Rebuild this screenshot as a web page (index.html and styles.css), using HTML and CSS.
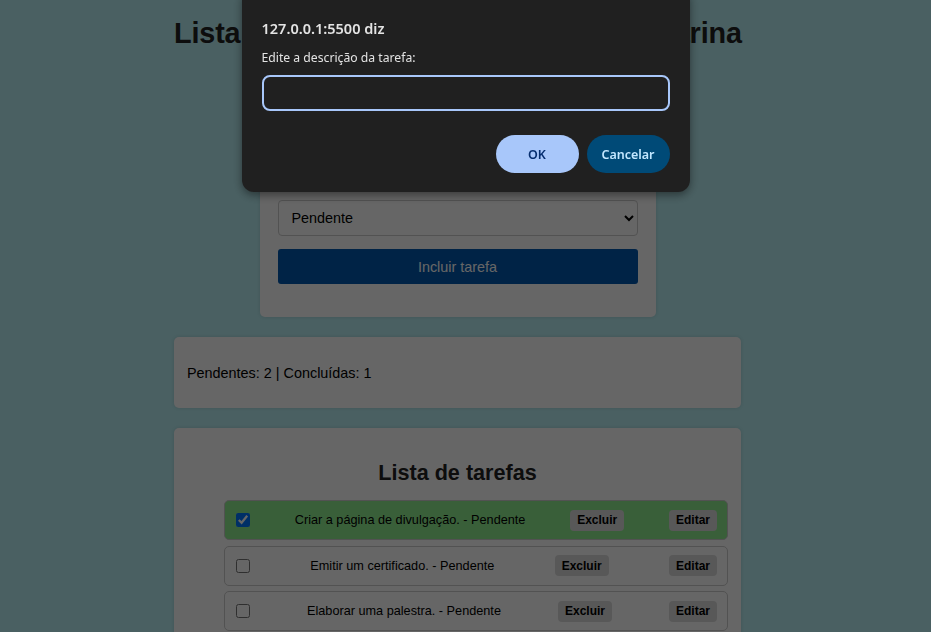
FILE: index.html
```html
<!DOCTYPE html>
<html lang="pt-BR">
<head>
<meta charset="utf-8">
<title>Lista de Tarefas</title>
<link rel="stylesheet" href="styles.css">
</head>
<body>
<div class="page">
  <h1 class="title">Lista de Tarefas do Evento Santa Catarina</h1>

  <section class="card form-card">
    <h2 class="form-title">Nova tarefa</h2>
    <input class="field" type="text" placeholder="Descrição da tarefa">
    <select class="field select">
      <option>Pendente</option>
      <option>Concluída</option>
    </select>
    <button class="add-btn" type="button">Incluir tarefa</button>
  </section>

  <section class="card stats-card">
    <p class="stats">Pendentes: 2 | Concluídas: 1</p>
  </section>

  <section class="card list-card">
    <h2 class="list-title">Lista de tarefas</h2>
    <ul class="tasks">
      <li class="task done">
        <input class="check" type="checkbox" checked>
        <span class="task-text">Criar a página de divulgação. - Pendente</span>
        <button class="task-btn" type="button">Excluir</button>
        <button class="task-btn" type="button">Editar</button>
      </li>
      <li class="task">
        <input class="check" type="checkbox">
        <span class="task-text">Emitir um certificado. - Pendente</span>
        <button class="task-btn" type="button">Excluir</button>
        <button class="task-btn" type="button">Editar</button>
      </li>
      <li class="task">
        <input class="check" type="checkbox">
        <span class="task-text">Elaborar uma palestra. - Pendente</span>
        <button class="task-btn" type="button">Excluir</button>
        <button class="task-btn" type="button">Editar</button>
      </li>
    </ul>
  </section>
</div>

<div class="scrim">
  <div class="dialog" role="dialog">
    <p class="dialog-title">127.0.0.1:5500 diz</p>
    <p class="dialog-label">Edite a descrição da tarefa:</p>
    <input class="dialog-input" type="text">
    <div class="dialog-actions">
      <button class="dlg-btn ok" type="button">OK</button>
      <button class="dlg-btn cancel" type="button">Cancelar</button>
    </div>
  </div>
</div>
</body>
</html>
```

FILE: styles.css
```css
* { box-sizing: border-box; }

html, body { margin: 0; }

body {
  min-height: 100vh;
  padding: 0 16px 0 0;
  background: #b9f0f5;
  font-family: "Liberation Sans", Arial, sans-serif;
  color: #000;
  overflow: hidden;
}

.page {
  width: 567px;
  margin: 0 auto;
  padding-top: 17px;
}

.title {
  margin: 0;
  font-size: 28.8px;
  line-height: 33px;
  font-weight: bold;
  text-align: center;
  letter-spacing: -0.15px;
  color: #222;
  white-space: nowrap;
}

.card {
  background: #fff;
  border-radius: 5px;
  box-shadow: 0 0 4px rgba(0, 0, 0, 0.12);
}

.form-card {
  width: 396px;
  margin: 48px auto 0;
  padding: 18px 18px 33px;
  display: flex;
  flex-direction: column;
  gap: 13px;
}

.form-title {
  margin: 0;
  font-size: 18px;
  line-height: 22px;
  text-align: center;
}

.field {
  height: 36px;
  width: 100%;
  border: 1px solid #ccc;
  border-radius: 4px;
  padding: 0 9px;
  font-family: "Liberation Sans", Arial, sans-serif;
  font-size: 14.4px;
  background: #fff;
  color: #000;
}

.add-btn {
  height: 35px;
  width: 100%;
  border: none;
  border-radius: 3px;
  background: #0058af;
  color: #fff;
  font-family: "Liberation Sans", Arial, sans-serif;
  font-size: 14.4px;
}

.stats-card {
  margin-top: 20px;
  height: 71px;
  padding: 0 13px;
  display: flex;
  align-items: center;
}

.stats {
  margin: 0;
  font-size: 14.4px;
  line-height: 17px;
  padding-top: 1px;
}

.list-card {
  margin-top: 20px;
  padding: 13px 13px 20px;
}

.list-title {
  margin: 19px 0 15px;
  font-size: 21.6px;
  line-height: 25px;
  text-align: center;
  color: #222;
}

.tasks {
  list-style: none;
  margin: 0;
  padding: 0 0 0 37px;
}

.task {
  height: 40px;
  margin-bottom: 5.5px;
  padding: 0 10px 0 11px;
  border: 1px solid #ccc;
  border-radius: 5px;
  display: flex;
  align-items: center;
  justify-content: space-between;
  background: #fff;
  font-size: 12.7px;
}

.task.done { background: #90ee90; }

.check {
  width: 14px;
  height: 14px;
  margin: 0;
}

.task-btn {
  height: 21px;
  padding: 0 7px;
  border: none;
  border-radius: 4px;
  background: #dcdcdc;
  color: #000;
  font-family: "Liberation Sans", Arial, sans-serif;
  font-size: 12px;
  font-weight: bold;
}

/* browser prompt */
.scrim {
  position: fixed;
  inset: 0;
  background: rgba(0, 0, 0, 0.6);
  display: flex;
  justify-content: center;
  align-items: flex-start;
}

.dialog {
  width: 448px;
  margin-top: -12px;
  padding: 30px 20px 19px;
  background: #202020;
  border-radius: 12px;
  box-shadow: 0 3px 10px rgba(0, 0, 0, 0.45);
  font-family: "Noto Sans", "Open Sans", sans-serif;
  color: #e3e3e3;
}

.dialog-title {
  margin: 0;
  font-size: 14.5px;
  line-height: 20px;
  font-weight: 600;
}

.dialog-label {
  margin: 11px 0 0;
  font-size: 12.2px;
  line-height: 17px;
}

.dialog-input {
  display: block;
  width: 100%;
  height: 36px;
  margin-top: 9px;
  border: 2px solid #a8c7fa;
  border-radius: 8px;
  background: transparent;
  color: #e3e3e3;
  outline: none;
}

.dialog-actions {
  margin-top: 24px;
  display: flex;
  justify-content: flex-end;
  gap: 8px;
}

.dlg-btn {
  width: 83px;
  height: 38px;
  border: none;
  border-radius: 19px;
  font-family: "Noto Sans", "Open Sans", sans-serif;
  font-size: 12.5px;
  font-weight: 600;
}

.dlg-btn.ok { background: #a8c7fa; color: #062e6f; }
.dlg-btn.cancel { background: #004a77; color: #c2e7ff; }
```
